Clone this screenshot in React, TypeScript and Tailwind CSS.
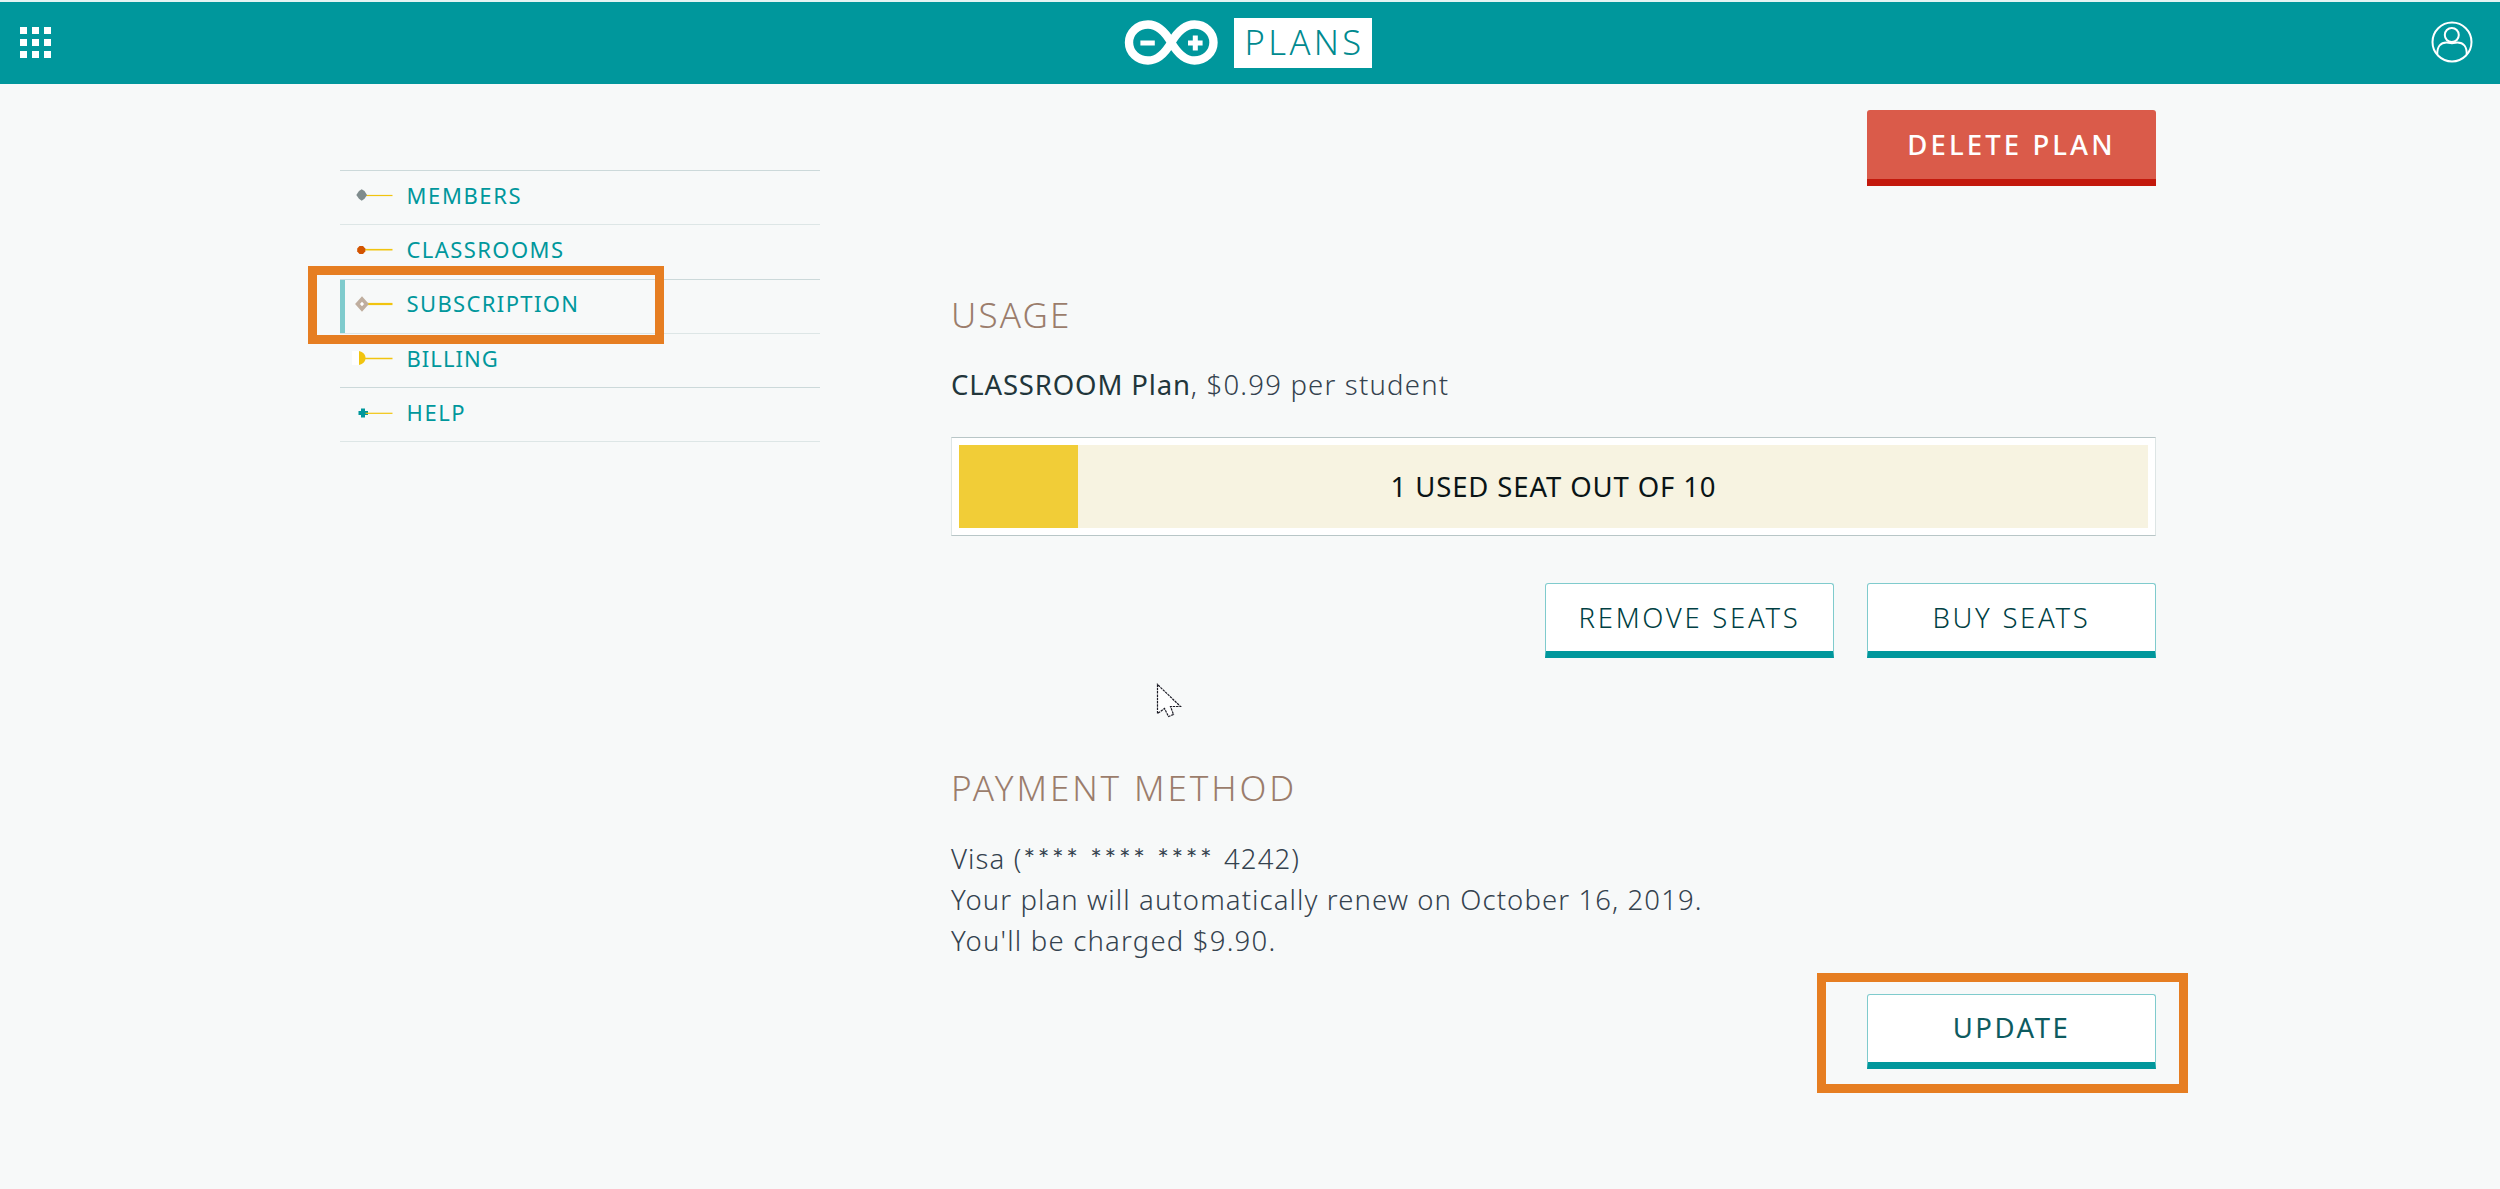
import type { ReactNode } from "react";

function InfinityLogo() {
  return (
    <svg width="94" height="46" viewBox="0 0 94 46" fill="none" stroke="#fff">
      <path
        d="M47.2 22.5C41.5 12.5 34 4.5 24 4.5A19 18 0 0 0 24 40.5C34 40.5 41.5 32.5 47.2 22.5C53 12.5 60.500 4.500 70.500 4.500A19 18 0 0 1 70.500 40.500C60.500 40.500 53 32.500 47.200 22.500Z"
        strokeWidth="8.400"
      />
      <path d="M16.400 23H30.800M64 23H78.600M71.300 15.500V30.500" strokeWidth="5" />
    </svg>
  );
}

function UserIcon() {
  return (
    <svg width="42" height="42" viewBox="0 0 42 42" fill="none" stroke="#fff" strokeWidth="2">
      <circle cx="21" cy="21" r="19.500" />
      <circle cx="20.800" cy="14" r="7" />
      <path d="M6.300 33.500C6 25.500 9.500 21.500 15.500 21.500C17 21.500 18.500 22.200 21 22.200S25 21.500 26.500 21.500C32.500 21.500 36 25.500 35.700 33.500" />
    </svg>
  );
}

const LINE = "#f1c40f";

function PinIcon({ kind }: { kind: string }) {
  return (
    <svg width="42" height="16" viewBox="0 0 42 16">
      {kind === "members" && (
        <>
          <path d="M14 8.500H40.500" stroke={LINE} strokeWidth="1.200" />
          <path d="M9.700 2.300L12.500 4L15 8L12.500 11.800L9.700 13.700L7 11.800L4.300 8L7 4Z" fill="#7f8c8d" />
        </>
      )}
      {kind === "classrooms" && (
        <>
          <path d="M13 7.700H40.500" stroke={LINE} strokeWidth="1.600" />
          <path d="M7.500 4H11L13.300 6.500V9.500L11 12H7.500L5.200 9.500V6.500Z" fill="#d35400" />
        </>
      )}
      {kind === "subscription" && (
        <>
          <path d="M15 8H40.500" stroke={LINE} strokeWidth="2.200" />
          <path d="M10 3L14.500 8L10 13L5.500 8Z" fill="#fff" stroke="#bfae9f" strokeWidth="3.600" />
        </>
      )}
      {kind === "billing" && (
        <>
          <path d="M0 1H7V15H0Z" fill="#fff" />
          <path d="M13 8.500H40.500" stroke={LINE} strokeWidth="1.500" />
          <path d="M7 1C11 1.800 13.500 4.500 13.500 8S11 14.200 7 15Z" fill={LINE} />
        </>
      )}
      {kind === "help" && (
        <>
          <path d="M6.500 8H16M11 3.500V12.500" stroke="#00979c" strokeWidth="4" />
          <path d="M13.500 8.300H40.500" stroke={LINE} strokeWidth="1.200" />
        </>
      )}
    </svg>
  );
}

const NAV = [
  { kind: "members", label: "MEMBERS", cls: "border-[#ccd9da] tracking-[1.600px]" },
  { kind: "classrooms", label: "CLASSROOMS", cls: "border-[#dde6e6] tracking-[1.420px]" },
  { kind: "subscription", label: "SUBSCRIPTION", cls: "border-[#ccd9da] tracking-[1.370px]" },
  { kind: "billing", label: "BILLING", cls: "border-[#dde6e6] tracking-[1.050px]" },
  { kind: "help", label: "HELP", cls: "border-[#ccd9da] tracking-[1.600px]" },
];

function Sidebar() {
  return (
    <nav className="relative mt-[86px] h-max w-[480px] border-b border-[#dde6e6]">
      {NAV.map(({ kind, label, cls }) => (
        <a key={kind} className={`relative flex h-[54.300px] items-center border-t pb-[4.500px] pl-[12px] text-[22px] text-[#00979c] ${cls}`}>
          {kind === "subscription" && <span className="absolute top-0 bottom-0 left-0 w-[5px] bg-[#7fcbcd]" />}
          <PinIcon kind={kind} />
          <span className="pb-[1px] pl-[12.500px] leading-[30px]">{label}</span>
        </a>
      ))}
      <div className="absolute top-[96px] left-[-32px] h-[78px] w-[356px] border-[9px] border-[#e67e22]" />
    </nav>
  );
}

function Button({ children, className = "" }: { children: ReactNode; className?: string }) {
  return (
    <button
      className={`flex h-[75px] w-[289px] items-center justify-center rounded-t-[3px] border border-b-[7px] border-[#7fcbcd] border-b-[#00979c] bg-white text-[27.500px] ${className}`}
    >
      {children}
    </button>
  );
}

function Cursor() {
  return (
    <svg className="absolute top-[683px] left-[1156px]" width="27" height="36" viewBox="0 0 27 36">
      <path d="M1.500 1.500V30.500L8.500 25.500L12.500 33.500L17.500 31.500L14.500 23.500H24.500Z" fill="#fff" stroke="#1c1c26" strokeWidth="1.200" strokeDasharray="2.500 0.800" />
    </svg>
  );
}

export default function App() {
  return (
    <div className="relative h-[1189px] w-[2500px] overflow-hidden bg-[#f7f9f9] font-['Noto_Sans','Open_Sans',sans-serif]">
      <header className="grid h-[84px] grid-cols-[1fr_auto_1fr] items-center border-t-2 border-[#e4f3f3] bg-[#00979c]">
        <div className="mb-[1px] ml-[20px] grid w-max grid-cols-[7px_7px_7px] gap-[5px]">
          {Array.from({ length: 9 }, (_, i) => (
            <span key={i} className="h-[7px] bg-white" />
          ))}
        </div>
        <div className="mr-[4px] mb-[1px] flex items-center gap-[16px]">
          <InfinityLogo />
          <div className="flex h-[50px] w-[138px] items-center bg-white pb-[1px] pl-[10.500px] text-[34.500px] font-light tracking-[3.400px] text-[#008a8f]">
            PLANS
          </div>
        </div>
        <div className="mr-[27px] mb-[3px] justify-self-end">
          <UserIcon />
        </div>
      </header>

      <div className="flex gap-[131px] pl-[340px]">
        <Sidebar />
        <main className="flex w-[1205px] flex-col pt-[26px] text-[27.500px] font-light text-[#34424e]">
          <button className="flex h-[76px] w-[289px] items-center justify-center self-end rounded-t-[3px] border-b-[7px] border-[#c3190c] bg-[#da5b4a] font-medium tracking-[3.100px] text-white">
            DELETE PLAN
          </button>

          <h2 className="mt-[104px] text-[35px] leading-[50px] tracking-[2.150px] text-[#9b7d6c]">USAGE</h2>
          <p className="mt-[24px] leading-[41px] tracking-[1.200px]">
            <span className="font-normal tracking-[0.850px] text-[#22363b]">CLASSROOM Plan</span>, $0.99 per student
          </p>
          <div className="mt-[32px] h-[99px] border border-[#b8c6c7] border-x-[#dde5e5] bg-white p-[7px]">
            <div className="relative flex h-full items-center justify-center bg-[#f7f3e1] font-normal tracking-[0.880px] text-[#0a1416]">
              <div className="absolute top-0 bottom-0 left-0 w-[10%] bg-[#f1cd37]" />
              1 USED SEAT OUT OF 10
            </div>
          </div>
          <div className="mt-[47px] flex justify-end gap-[33px]">
            <Button className="tracking-[2.700px] font-light text-[#003f43]">REMOVE SEATS</Button>
            <Button className="tracking-[2.700px] font-light text-[#003f43]">BUY SEATS</Button>
          </div>

          <h2 className="mt-[105px] text-[35px] leading-[50px] tracking-[2.900px] text-[#9b7d6c]">PAYMENT METHOD</h2>
          <div className="mt-[24.500px] leading-[41px] tracking-[1.090px]">
            <p>
              Visa (<span className="pl-[1px] font-['Lato'] font-normal tracking-[2.620px]">**** **** **** </span>4242)
            </p>
            <p>Your plan will automatically renew on October 16, 2019.</p>
            <p className="tracking-[1.200px]">You'll be charged $9.90.</p>
          </div>
          <div className="relative mt-[33px] self-end">
            <Button className="tracking-[2.500px] font-normal text-[#0d5b60]">UPDATE</Button>
            <div className="absolute top-[-21px] left-[-50px] h-[120px] w-[371px] border-[9px] border-[#e67e22]" />
          </div>
        </main>
      </div>
      <Cursor />
    </div>
  );
}
